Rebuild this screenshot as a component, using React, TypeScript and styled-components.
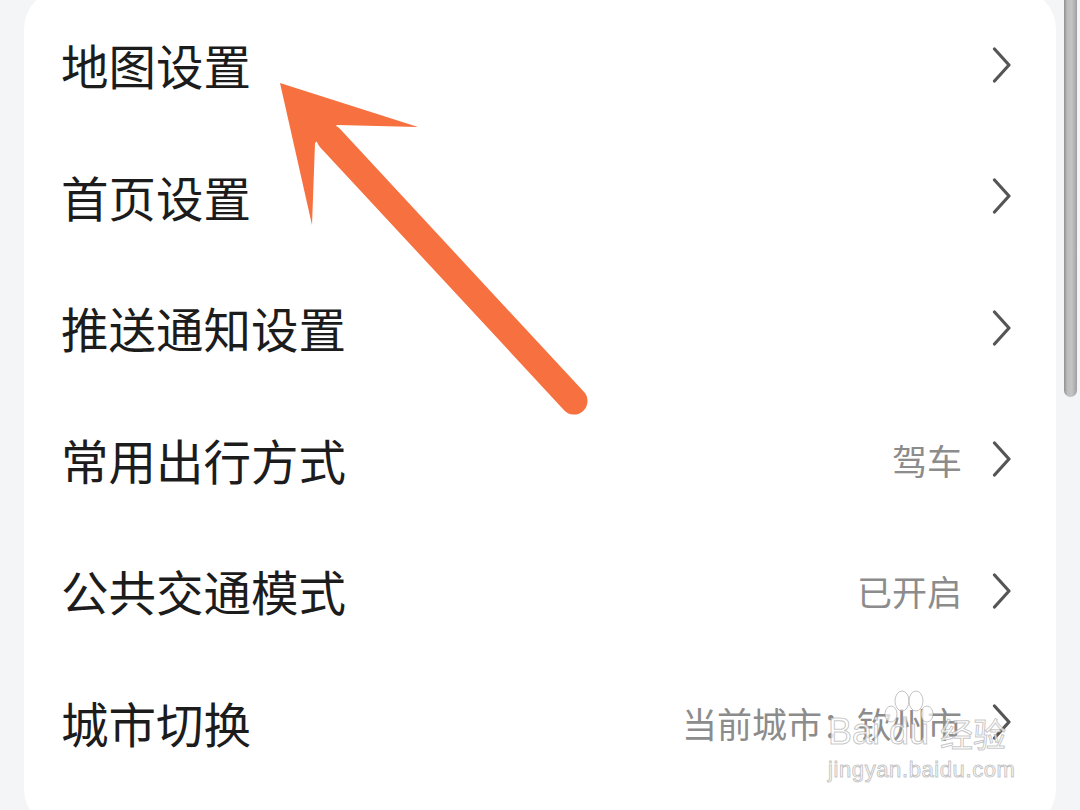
import React from "react";
import styled, { createGlobalStyle } from "styled-components";

const Global = createGlobalStyle`
  html, body { margin: 0; padding: 0; background: #f4f5f7; }
  body { font-family: "Noto Sans CJK SC", "Noto Sans", sans-serif; }
  * { box-sizing: border-box; }
`;

const Page = styled.div`
  position: relative;
  width: 1080px;
  height: 810px;
  overflow: hidden;
  background: #f4f5f7;
  padding: 0 24px;
`;

const Card = styled.div`
  margin-top: -11px;
  width: 1032px;
  height: 840px;
  background: #ffffff;
  border-radius: 40px;
  padding-top: 10px;
  display: flex;
  flex-direction: column;
`;

const Row = styled.div`
  height: 131.5px;
  flex: 0 0 131.5px;
  display: flex;
  align-items: center;
  padding: 0 44px 0 37px;
`;

const Label = styled.div`
  flex: 1;
  font-size: 47.5px;
  line-height: 1;
  color: #1c1c1c;
`;

const Value = styled.div`
  font-size: 35px;
  line-height: 1;
  color: #8c8c8c;
  margin-right: 30px;
`;

const Chevron = styled.svg`
  width: 20px;
  height: 36px;
  flex: 0 0 20px;
`;

const ScrollThumb = styled.div`
  position: absolute;
  left: 1064px;
  top: -20px;
  width: 13px;
  height: 417px;
  border-radius: 7px;
  background: linear-gradient(90deg, #8f8f8f 0%, #bdbdbd 25%, #c4c4c4 60%, #a0a0a0 100%);
`;

const ArrowLayer = styled.svg`
  position: absolute;
  left: 0;
  top: 0;
  pointer-events: none;
`;

const Watermark = styled.div`
  position: absolute;
  left: 828px;
  top: 690px;
  display: flex;
  flex-direction: column;
  align-items: flex-start;
  color: rgba(255, 255, 255, 0.75);
  -webkit-text-stroke: 1px rgba(150, 150, 150, 0.55);
  pointer-events: none;
`;

const WmTop = styled.div`
  display: flex;
  align-items: flex-end;
  height: 60px;
`;

const WmBig = styled.span`
  font-family: "Liberation Sans", Arial, sans-serif;
  font-size: 36px;
  line-height: 1;
`;

const WmPaw = styled.div`
  position: relative;
  width: 58px;
  height: 60px;
  display: flex;
  align-items: flex-end;
  justify-content: center;
`;

const WmPawSvg = styled.svg`
  position: absolute;
  top: 0;
  left: 2px;
`;

const WmCjk = styled.span`
  font-family: "Noto Sans CJK SC", sans-serif;
  font-size: 33px;
  line-height: 1;
  margin-left: 2px;
`;

const WmUrl = styled.div`
  font-family: "Liberation Sans", Arial, sans-serif;
  font-size: 22px;
  line-height: 1;
  margin-top: 9px;
  letter-spacing: 0.6px;
`;

const ChevronIcon = () => (
  <Chevron viewBox="0 0 20 36">
    <polyline points="2.5,2 17,18 2.5,34" fill="none" stroke="#555" strokeWidth="3.2" strokeLinecap="round" strokeLinejoin="round" />
  </Chevron>
);

const rows: { label: string; value?: string }[] = [
  { label: "地图设置" },
  { label: "首页设置" },
  { label: "推送通知设置" },
  { label: "常用出行方式", value: "驾车" },
  { label: "公共交通模式", value: "已开启" },
  { label: "城市切换", value: "当前城市：钦州市" },
];

export default function App() {
  return (
    <>
      <Global />
      <Page>
        <Card>
          {rows.map((r) => (
            <Row key={r.label}>
              <Label>{r.label}</Label>
              {r.value && <Value>{r.value}</Value>}
              <ChevronIcon />
            </Row>
          ))}
        </Card>
        <ScrollThumb />
        <ArrowLayer width="1080" height="810" viewBox="0 0 1080 810">
          <line x1="330" y1="138" x2="574" y2="401" stroke="#f7703f" strokeWidth="27" strokeLinecap="round" />
          <polygon points="280,83 418,127 337,125 315,143 312,225" fill="#f7703f" />
        </ArrowLayer>
        <Watermark>
          <WmTop>
            <WmBig>Bai</WmBig>
            <WmPaw>
              <WmPawSvg width="54" height="36" viewBox="0 0 54 36">
                <g fill="rgba(255,255,255,0.7)" stroke="rgba(150,150,150,0.55)" strokeWidth="1">
                  <ellipse cx="9" cy="24" rx="6" ry="8" />
                  <ellipse cx="20" cy="11" rx="7" ry="10" />
                  <ellipse cx="34" cy="11" rx="7" ry="10" />
                  <ellipse cx="45" cy="24" rx="6" ry="8" />
                </g>
              </WmPawSvg>
              <WmBig>du</WmBig>
            </WmPaw>
            <WmCjk>经验</WmCjk>
          </WmTop>
          <WmUrl>jingyan.baidu.com</WmUrl>
        </Watermark>
      </Page>
    </>
  );
}
